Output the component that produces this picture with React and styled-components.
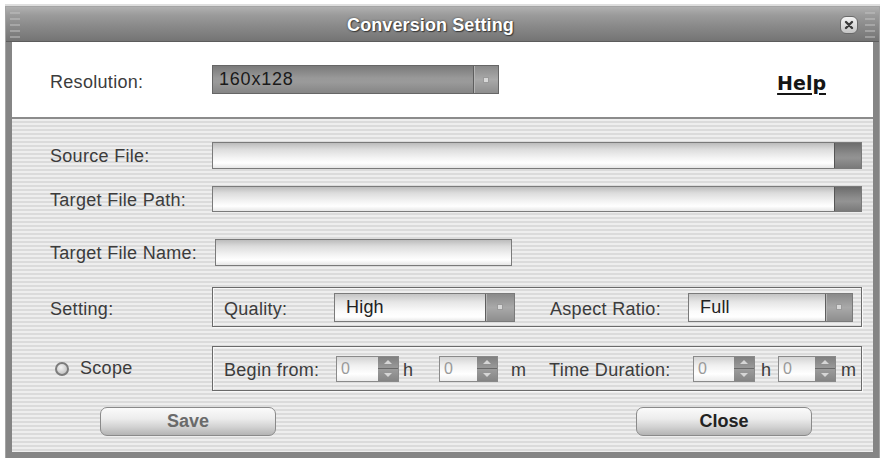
import React from 'react';
import styled, { createGlobalStyle } from 'styled-components';

const Global = createGlobalStyle`
  html, body { margin: 0; padding: 0; background: #ffffff; }
  body { font-family: "Liberation Sans", Arial, sans-serif; }
  * { box-sizing: border-box; }
`;

const Window = styled.div`
  margin: 7px 0 0 6px;
  width: 873px;
  height: 451px;
  display: flex;
  flex-direction: column;
  box-shadow: 0 0 0 1px #a4a4a4, 0 -2px 0 1px #dedede;
`;

const TitleBar = styled.div`
  height: 35px;
  flex: none;
  display: flex;
  align-items: center;
  background: linear-gradient(180deg, #b0b0b0 0%, #9a9a9a 25%, #8a8a8a 55%, #747474 100%);
  border-bottom: 1px solid #5c5c5c;
`;

const Grip = styled.svg`
  flex: none;
  width: 12px;
  height: 30px;
  margin: 0 ${p => p.$right ? '3px' : '0'} 0 ${p => p.$right ? '6px' : '3px'};
`;

const Title = styled.div`
  flex: 1;
  text-align: center;
  padding-top: 2px;
  color: #ffffff;
  font-weight: bold;
  font-size: 18px;
  letter-spacing: 0.1px;
  text-shadow: 0 0 2px #3a3a3a, 1px 1px 1px #3a3a3a;
`;

const CloseBox = styled.div`
  flex: none;
  width: 18px;
  height: 18px;
  margin-top: 2px;
  border-radius: 6px;
  background: linear-gradient(180deg, #f4f4f4, #c4c4c4);
  border: 1px solid #6a6a6a;
  display: flex;
  align-items: center;
  justify-content: center;
`;

const Frame = styled.div`
  flex: 1;
  display: flex;
  flex-direction: column;
  border: 6px solid #858585;
  border-top: none;
  box-shadow: inset 1px 0 0 #5e5e5e, inset -1px 0 0 #5e5e5e, inset 0 -1px 0 #5e5e5e;
`;

const TopSection = styled.div`
  height: 77px;
  flex: none;
  display: flex;
  align-items: center;
  background: #ffffff;
  border-bottom: 2px solid #8c8c8c;
  padding: 0 47px 0 38px;
`;

const Label = styled.div`
  flex: none;
  width: ${p => p.$w || 162}px;
  padding-top: ${p => p.$pt || 2}px;
  font-size: 18px;
  color: #3c3c3c;
  letter-spacing: 0.3px;
  white-space: nowrap;
`;

const DarkSelect = styled.div`
  width: 287px;
  height: 29px;
  display: flex;
  border: 1px solid #666666;
  background: linear-gradient(180deg, #7a7a7a 0%, #999999 45%, #9a9a9a 60%, #858585 100%);
`;

const SelectText = styled.div`
  flex: 1;
  display: flex;
  align-items: center;
  padding-left: ${p => p.$pad || 6}px;
  font-size: 18px;
  color: ${p => p.$dark ? '#1a1a1a' : '#222222'};
  letter-spacing: ${p => p.$dark ? '0.8px' : '0.2px'};
`;

const SelectButton = styled.div`
  flex: none;
  width: ${p => p.$w || 25}px;
  display: flex;
  align-items: center;
  justify-content: center;
  border-left: 1px solid #5e5e5e;
  box-shadow: inset 1px 0 0 #b5b5b5;
  background: linear-gradient(180deg, #8a8a8a, #a9a9a9 50%, #8e8e8e);
`;

const Dot = styled.span`
  width: 6px;
  height: 6px;
  background: #d8d8d8;
  border: 1px solid #9a9a9a;
`;

const Help = styled.a`
  margin-left: auto;
  padding-top: 7px;
  font-family: "DejaVu Sans", Verdana, sans-serif;
  font-weight: bold;
  font-size: 19px;
  color: #151515;
  text-decoration: underline;
  text-decoration-thickness: 2px;
  text-underline-offset: 3px;
`;

const Panel = styled.div`
  flex: 1;
  display: flex;
  flex-direction: column;
  padding: 23px 11px 0 38px;
  background: repeating-linear-gradient(180deg, #eeeeee 0px, #eeeeee 2px, #dbdbdb 2px, #dbdbdb 4px);
`;

const Row = styled.div`
  display: flex;
  align-items: center;
  margin-top: ${p => p.$top || 0}px;
`;

const Field = styled.div`
  flex: ${p => p.$w ? 'none' : 1};
  width: ${p => p.$w ? p.$w + 'px' : 'auto'};
  margin-left: ${p => p.$ml || 0}px;
  height: ${p => p.$h || 27}px;
  display: flex;
  justify-content: flex-end;
  border: 1px solid #7a7a7a;
  background: linear-gradient(180deg, #bcbcbc 0%, #dcdcdc 25%, #f4f4f4 60%, #ffffff 80%, #e6e6e6 100%);
`;

const Browse = styled.div`
  width: 27px;
  border-left: 1px solid #555555;
  background: linear-gradient(180deg, #6c6c6c, #8c8c8c 45%, #939393 60%, #7a7a7a);
`;

const GroupBox = styled.div`
  flex: 1;
  min-width: 0;
  height: ${p => p.$h}px;
  display: flex;
  align-items: center;
  padding: 0 6px 0 11px;
  border: 1px solid #6a6a6a;
  box-shadow: inset 1px 1px 0 #f8f8f8, 1px 1px 0 #f8f8f8;
`;

const LightSelect = styled.div`
  flex: none;
  width: ${p => p.$w}px;
  height: 29px;
  display: flex;
  border: 1px solid #7a7a7a;
  background: linear-gradient(180deg, #c4c4c4 0%, #e6e6e6 30%, #fbfbfb 65%, #ffffff 85%, #e8e8e8 100%);
`;

const Unit = styled.div`
  flex: none;
  width: ${p => p.$w}px;
  padding-left: ${p => p.$pl}px;
  padding-top: 3px;
  font-size: 18px;
  color: #3c3c3c;
`;

const Spinner = styled.div`
  flex: none;
  width: ${p => p.$w}px;
  height: 26px;
  display: flex;
  border: 1px solid #8a8a8a;
`;

const SpinInput = styled.div`
  flex: 1;
  display: flex;
  align-items: center;
  padding-left: 4px;
  font-size: 16px;
  color: #9a9a9a;
  background: linear-gradient(180deg, #d4d4d4 0%, #f0f0f0 35%, #ffffff 70%, #ececec 100%);
`;

const SpinArrows = styled.div`
  flex: none;
  width: 20px;
  display: flex;
  flex-direction: column;
  background: linear-gradient(180deg, #808080, #9c9c9c 50%, #858585);
`;

const SpinHalf = styled.div`
  flex: 1;
  display: flex;
  align-items: center;
  justify-content: center;
  border-top: ${p => p.$bottom ? '1px solid #6a6a6a' : 'none'};
`;

const Arrow = styled.span`
  width: 0;
  height: 0;
  border-left: 4px solid transparent;
  border-right: 4px solid transparent;
  ${p => p.$down ? 'border-top: 4px solid #d6d6d6;' : 'border-bottom: 4px solid #d6d6d6;'}
`;

const Radio = styled.span`
  flex: none;
  width: 14px;
  height: 14px;
  margin: 0 11px 0 5px;
  border-radius: 50%;
  border: 2px solid #7c7c7c;
  background: radial-gradient(circle at 40% 35%, #f2f2f2, #b8b8b8);
`;

const ScopeLabel = styled.div`
  flex: none;
  width: 132px;
  font-size: 18px;
  color: #3c3c3c;
  letter-spacing: 0.3px;
`;

const ButtonRow = styled.div`
  display: flex;
  justify-content: space-between;
  margin-top: 16px;
  padding: 0 50px 0 50px;
`;

const Button = styled.button`
  width: 176px;
  height: 29px;
  border: 1px solid #8a8a8a;
  border-radius: 7px;
  background: linear-gradient(180deg, #fbfbfb 0%, #ececec 40%, #d2d2d2 70%, #b4b4b4 100%);
  font-family: "Liberation Sans", Arial, sans-serif;
  font-weight: bold;
  font-size: 18px;
  color: ${p => p.$muted ? '#6a6a6a' : '#222222'};
  padding: 0;
`;

const GripIcon = ({ right }) => (
  <Grip $right={right} viewBox="0 0 12 30">
    {[4, 10, 16, 22, 28].map(y => (
      <line key={y} x1="1" x2="11" y1={y} y2={y} stroke="#c2c2c2" strokeWidth="1" />
    ))}
  </Grip>
);

const Spin = ({ w }) => (
  <Spinner $w={w}>
    <SpinInput>0</SpinInput>
    <SpinArrows>
      <SpinHalf><Arrow /></SpinHalf>
      <SpinHalf $bottom><Arrow $down /></SpinHalf>
    </SpinArrows>
  </Spinner>
);

export default function App() {
  return (
    <>
      <Global />
      <Window>
        <TitleBar>
          <GripIcon />
          <Title>Conversion Setting</Title>
          <CloseBox>
            <svg width="10" height="10" viewBox="0 0 10 10">
              <path d="M2 2 L8 8 M8 2 L2 8" stroke="#3a3a3a" strokeWidth="2.4" strokeLinecap="round" />
            </svg>
          </CloseBox>
          <GripIcon right />
        </TitleBar>
        <Frame>
          <TopSection>
            <Label $pt={6}>Resolution:</Label>
            <DarkSelect>
              <SelectText $dark>160x128</SelectText>
              <SelectButton><Dot /></SelectButton>
            </DarkSelect>
            <Help>Help</Help>
          </TopSection>
          <Panel>
            <Row>
              <Label>Source File:</Label>
              <Field><Browse /></Field>
            </Row>
            <Row $top={17}>
              <Label>Target File Path:</Label>
              <Field $h={26}><Browse /></Field>
            </Row>
            <Row $top={27}>
              <Label>Target File Name:</Label>
              <Field $w={297} $ml={3} />
            </Row>
            <Row $top={21}>
              <Label $pt={4}>Setting:</Label>
              <GroupBox $h={40}>
                <Label $w={110} $pt={4}>Quality:</Label>
                <LightSelect $w={181}>
                  <SelectText $pad={11}>High</SelectText>
                  <SelectButton $w={29}><Dot /></SelectButton>
                </LightSelect>
                <Label $w={173} $pt={4} style={{ paddingLeft: 35 }}>Aspect Ratio:</Label>
                <LightSelect $w={165}>
                  <SelectText $pad={11}>Full</SelectText>
                  <SelectButton $w={27}><Dot /></SelectButton>
                </LightSelect>
              </GroupBox>
            </Row>
            <Row $top={19}>
              <Radio />
              <ScopeLabel>Scope</ScopeLabel>
              <GroupBox $h={45}>
                <Label $w={112} $pt={4}>Begin from:</Label>
                <Spin w={63} />
                <Unit $w={40} $pl={4}>h</Unit>
                <Spin w={59} />
                <Unit $w={51} $pl={13}>m</Unit>
                <Label $w={144} $pt={4}>Time Duration:</Label>
                <Spin w={62} />
                <Unit $w={23} $pl={6}>h</Unit>
                <Spin w={58} />
                <Unit $w={17} $pl={5}>m</Unit>
              </GroupBox>
            </Row>
            <ButtonRow>
              <Button $muted>Save</Button>
              <Button>Close</Button>
            </ButtonRow>
          </Panel>
        </Frame>
      </Window>
    </>
  );
}
